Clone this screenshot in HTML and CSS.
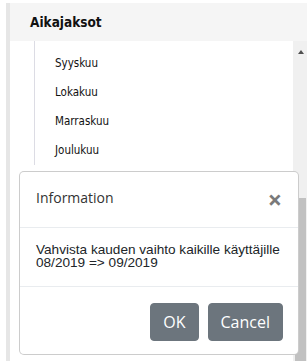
FILE: index.html
```html
<!DOCTYPE html>
<html lang="fi">
<head>
	<title>Aikajaksot</title>
	<meta charset="utf-8">
	<link rel="stylesheet" href="styles.css">
</head>
<body>

<!-- wrap -->
<div class="page">

    <div class="panel">
        <div class="panel-head">Aikajaksot</div>
        <div class="panel-body">
            <ul class="months">
                <li>Syyskuu</li>
                <li>Lokakuu</li>
                <li>Marraskuu</li>
                <li>Joulukuu</li>
            </ul>
            <div class="scrollbar">
                <span class="scroll-up"></span>
                <span class="scroll-thumb"></span>
            </div>
        </div>
    </div>

    <!-- modal -->
    <div class="modal">
        <div class="modal-head">
            <span class="modal-title">Information</span>
            <span class="modal-close">&times;</span>
        </div>
        <div class="modal-body">
            Vahvista kauden vaihto kaikille käyttäjille<br>
            08/2019 =&gt; 09/2019
        </div>
        <div class="modal-foot">
            <button class="btn">OK</button>
            <button class="btn">Cancel</button>
        </div>
    </div>
    <!-- //modal -->

</div>
<!-- //wrap -->

</body>
</html>
```

FILE: styles.css
```css
*{padding: 0; margin: 0; border: 0; box-sizing: border-box;}
html, body {height: 100%; overflow: hidden; background: #fff;}

.page {position: relative; height: 100%; padding-top: 3px;}

/* panel */
.panel {display: flex; flex-direction: column; height: 100%; margin-left: 6px; border-left: 4px solid #e6e6e6;}
.panel-head {height: 38px; padding-left: 20px; background: #f5f5f5; color: #111; font: bold 13.5px/38px "DejaVu Sans Condensed", "DejaVu Sans", sans-serif;}
.panel-body {display: flex; flex: 1;}

.months {flex: 1; align-self: flex-start; list-style: none; margin-left: 24px; padding: 8px 0 0 20px; border-left: 1px solid #dcdce4;}
.months li {height: 29px; color: #111; font: 11.5px/29px "DejaVu Sans Condensed", "DejaVu Sans", sans-serif;}

.scrollbar {display: flex; flex-direction: column; width: 14px; padding-top: 9px; background: #f0f0f0;}
.scroll-up {width: 0; height: 0; margin-left: 5px; border-left: 3px solid transparent; border-right: 3px solid transparent; border-bottom: 4px solid #505050;}
.scroll-thumb {flex: 1; margin: 144px 1px 0 2px; background: #c1c1c1;}

/* modal */
.modal {position: absolute; left: 19px; top: 171px; width: 280px; background: #fff; border: 1px solid rgba(0,0,0,.2); border-radius: 5px;}

.modal-head {display: flex; justify-content: space-between; align-items: center; height: 56px; padding: 0 16px 4px 16px; border-bottom: 1px solid #e9ecef;}
.modal-title {color: #333; font: 14px/24px "Open Sans", sans-serif;}
.modal-close {color: #7a7a7a; font: bold 25px/24px "Open Sans", sans-serif; margin-top: 3px;}

.modal-body {padding: 15px 16px 17px; border-bottom: 1px solid #e9ecef; color: #212529; font: 13.6px/13px "Liberation Sans", Arial, sans-serif;}

.modal-foot {display: flex; justify-content: flex-end; gap: 9px; padding: 16px 15px 13px 16px;}
.btn {padding: 6px 12px; border: 1px solid #6c757d; border-radius: 4px; background: #6c757d; color: #fff; font: 16px/24px "Open Sans", sans-serif;}
```
